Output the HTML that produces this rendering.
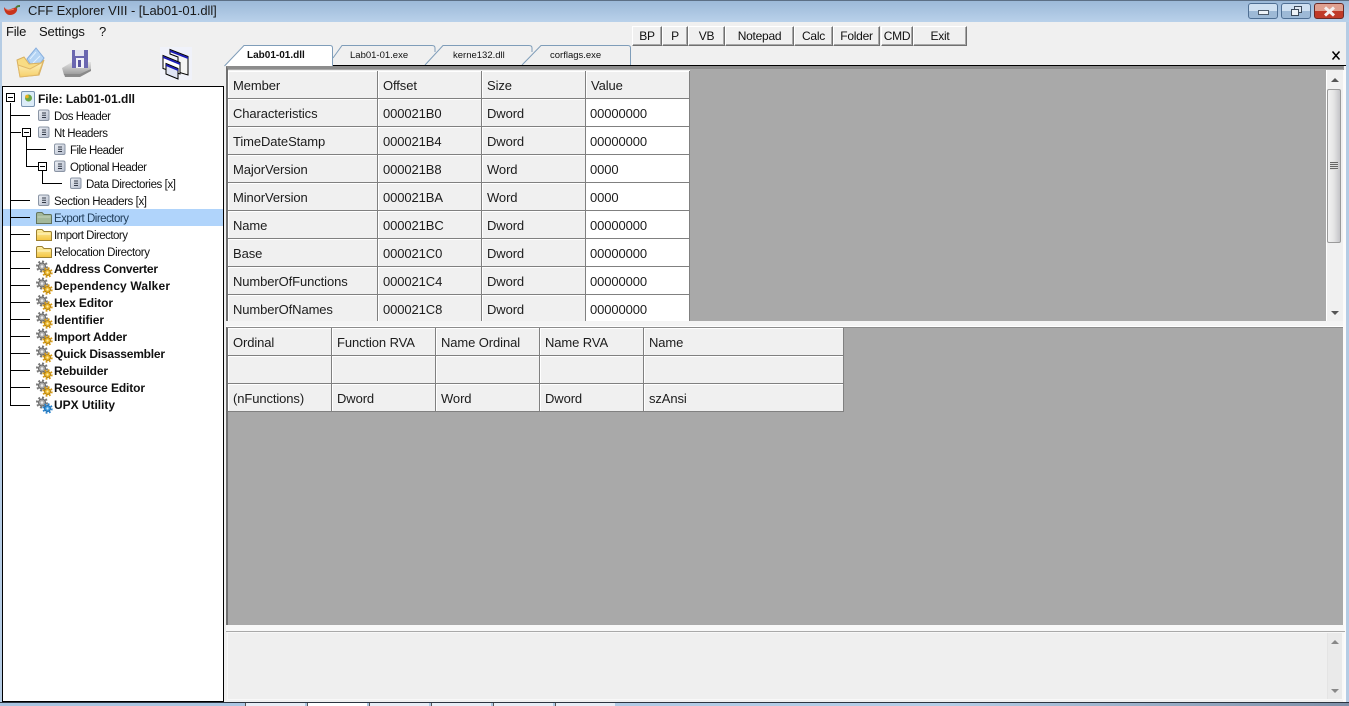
<!DOCTYPE html>
<html><head><meta charset="utf-8"><title>CFF Explorer VIII</title>
<style>
*{box-sizing:border-box}
html,body{margin:0;padding:0;width:1349px;height:706px;overflow:hidden;background:#f0f0f0;font-family:"Liberation Sans",sans-serif;font-size:13px;color:#111}
.a{position:absolute}
.t{position:absolute;white-space:nowrap;line-height:16px}
.c{position:absolute;background:#f0f0f0;border-right:1px solid #808080;border-bottom:1px solid #808080;padding:7px 0 0 5px;line-height:16px;white-space:nowrap;box-shadow:inset 1px 1px 0 #fff;letter-spacing:-.1px;color:#1c1c1c}
.w{background:#fff;padding-left:4px;box-shadow:none}
.b{position:absolute;top:26px;height:20px;background:#f0f0f0;border:1px solid;border-color:#fff #707070 #707070 #fff;box-shadow:inset -1px -1px 0 #a8a8a8;font-size:12px;line-height:18px;text-align:center;letter-spacing:-.25px}
.tab{font-size:9.5px;position:absolute;top:50px;line-height:12px;white-space:nowrap}
</style></head><body>
<!-- title bar -->
<div class="a" style="left:0;top:0;width:1349px;height:22px;background:linear-gradient(#9cb9d8,#b9d1ea);border-top:1px solid #5c6f85"></div>
<svg class="a" style="left:3px;top:3px" width="18" height="14" viewBox="0 0 18 14"><path d="M1 4C3 7 5 7 8 6 10 5 12 4 14 5 15 9 11 12 7 12 3 12 1 8 1 4Z" fill="#c8331c"/><path d="M3 6C5 8 8 7 11 6" stroke="#e87a60" fill="none"/><path d="M13 5C14 3 15 3 17 3" stroke="#4a7a3a" stroke-width="2" fill="none"/></svg>
<div class="t" style="left:28px;top:3px;font-size:13px;color:#1a1a1a;letter-spacing:-.06px">CFF Explorer VIII - [Lab01-01.dll]</div>
<div class="a" style="left:1248px;top:3px;width:30px;height:16px;border:1px solid #4f6f93;border-radius:3px;background:linear-gradient(#cfe0f1 50%,#9db9d6 50%)"><div class="a" style="left:9px;top:6px;width:11px;height:5px;background:#eef3f8;border:1px solid #4c5a6a"></div></div>
<div class="a" style="left:1281px;top:3px;width:30px;height:16px;border:1px solid #4f6f93;border-radius:3px;background:linear-gradient(#cfe0f1 50%,#9db9d6 50%)"><div class="a" style="left:12px;top:2px;width:8px;height:7px;background:#dfe8f2;border:1px solid #3c4a5a"></div><div class="a" style="left:9px;top:5px;width:8px;height:7px;background:#eef3f8;border:1px solid #3c4a5a"></div></div>
<div class="a" style="left:1314px;top:3px;width:30px;height:16px;border:1px solid #6a2a26;border-radius:3px;background:linear-gradient(#e0a090 50%,#c03a28 50%)"><svg class="a" style="left:8px;top:2px" width="13" height="11" viewBox="0 0 13 11"><path d="M2 1.500l9 8M11 1.500l-9 8" stroke="#f4eeee" stroke-width="3"/></svg></div>
<!-- window edges -->
<div class="a" style="left:0;top:22px;width:2px;height:684px;background:#b5cce4"></div>
<div class="a" style="left:1346px;top:22px;width:3px;height:684px;background:#b5cce4"></div>
<div class="a" style="left:1343px;top:70px;width:3px;height:633px;background:#fbfbfb"></div>
<!-- menu -->
<div class="t" style="left:6px;top:24px;letter-spacing:-.2px">File</div>
<div class="t" style="left:39px;top:24px;letter-spacing:-.15px">Settings</div>
<div class="t" style="left:99px;top:24px">?</div>
<!-- toolbar icons -->
<svg class="a" style="left:15px;top:46px" width="32" height="34" viewBox="0 0 32 34"><defs><linearGradient id="fy" x1="0" y1="0" x2="0" y2="1"><stop offset="0" stop-color="#fdf3c0"/><stop offset="1" stop-color="#f6cf6a"/></linearGradient></defs><path d="M12 13L21 2 29 12 20 25Z" fill="#b4d4f4" stroke="#86aede"/><path d="M15 13L21 6M18 17L25 10" stroke="#e0f0ff"/><path d="M2 14L9 11 14 18 26 17 29 14 24 29 5 31Z" fill="#f8dc84" stroke="#d8b060"/><path d="M3 19L15 23 28 16 23 29 5 31Z" fill="url(#fy)" stroke="#e0b868"/></svg>
<svg class="a" style="left:60px;top:47px" width="34" height="32" viewBox="0 0 34 32"><defs><linearGradient id="bs" x1="0" y1="0" x2="0" y2="1"><stop offset="0" stop-color="#e4e4e4"/><stop offset="1" stop-color="#9a9a9a"/></linearGradient></defs><path d="M2 21L12 15H31V23L20 28H4Z" fill="url(#bs)"/><path d="M4 27H20L31 22V24L20 30H5Z" fill="#8a8a8a"/><rect x="12" y="3" width="16" height="18" fill="#6a66b0"/><rect x="15" y="3" width="9" height="6" fill="#e4e4f0"/><rect x="16" y="11" width="8" height="10" fill="#f0f0f8"/><rect x="18" y="13" width="3" height="7" fill="#5a56a0"/></svg>
<svg class="a" style="left:160px;top:47px" width="32" height="33" viewBox="0 0 32 33"><rect width="32" height="33" fill="#f0f2fa"/><g stroke="#000"><path d="M10 2.500L28 9.500V28L18 25V10L10 7Z" fill="#f4f4f4"/><path d="M3 8.500L20 15.500V27L3 21.500Z" fill="#fff"/><path d="M6 16.500L18 21.500V32L6 27Z" fill="#dfe4f4"/></g><path d="M10 3L28 10V12L10 5ZM3 9L20 16V18L3 11ZM6 17L18 22V24L6 19Z" fill="#1a1ab4"/></svg>
<!-- tool buttons -->
<div class="b" style="left:632px;width:30px">BP</div>
<div class="b" style="left:662px;width:26px">P</div>
<div class="b" style="left:688px;width:37px">VB</div>
<div class="b" style="left:725px;width:69px">Notepad</div>
<div class="b" style="left:794px;width:39px">Calc</div>
<div class="b" style="left:833px;width:47px">Folder</div>
<div class="b" style="left:881px;width:32px">CMD</div>
<div class="b" style="left:913px;width:54px">Exit</div>
<!-- tabs -->
<svg class="a" style="left:224px;top:43px" width="410" height="24" viewBox="0 0 410 24">
<path d="M0.500 23L20 2.500H106Q108.500 2.500 108.500 5V23" fill="#fff" stroke="#7f9db9"/>
<path d="M109 15L118 2.500H208Q211 2.500 211 5V9" fill="none" stroke="#7f9db9"/>
<path d="M201 22L219 2.500H305Q308 2.500 308 5V9" fill="none" stroke="#7f9db9"/>
<path d="M298 22L317 2.500H404Q406.500 2.500 406.500 5V22" fill="none" stroke="#7f9db9"/>
</svg>
<div class="tab" style="left:247px;font-weight:bold;font-size:10px">Lab01-01.dll</div>
<div class="tab" style="left:350px">Lab01-01.exe</div>
<div class="tab" style="left:453px">kerne132.dll</div>
<div class="tab" style="left:550px">corflags.exe</div>
<div class="a" style="left:333px;top:65px;width:1013px;height:1px;background:#000"></div>
<svg class="a" style="left:1331px;top:51px" width="10" height="9" viewBox="0 0 10 9"><path d="M1.500 .5l7 8M8.500 .5l-7 8" stroke="#000" stroke-width="1.500"/></svg>
<!-- panel 1 -->
<div class="a" style="left:226px;top:66px;width:1118px;height:4px;background:#9a9a9a"></div>
<div class="a" style="left:226px;top:66px;width:1117px;height:255px;background:#a9a9a9;border-top:3px solid #8c8c8c;border-left:2px solid #707070"></div>
<div class="a" style="left:228px;top:70px;width:462px;height:251px;background:#f0f0f0;overflow:hidden">
<div class="c" style="left:0;top:1px;width:150px;height:28px">Member</div><div class="c" style="left:150px;top:1px;width:104px;height:28px">Offset</div><div class="c" style="left:254px;top:1px;width:104px;height:28px">Size</div><div class="c" style="left:358px;top:1px;width:104px;height:28px">Value</div>
<div class="c" style="left:0;top:29px;width:150px;height:28px">Characteristics</div><div class="c" style="left:150px;top:29px;width:104px;height:28px">000021B0</div><div class="c" style="left:254px;top:29px;width:104px;height:28px">Dword</div><div class="c w" style="left:358px;top:29px;width:104px;height:28px">00000000</div>
<div class="c" style="left:0;top:57px;width:150px;height:28px">TimeDateStamp</div><div class="c" style="left:150px;top:57px;width:104px;height:28px">000021B4</div><div class="c" style="left:254px;top:57px;width:104px;height:28px">Dword</div><div class="c w" style="left:358px;top:57px;width:104px;height:28px">00000000</div>
<div class="c" style="left:0;top:85px;width:150px;height:28px">MajorVersion</div><div class="c" style="left:150px;top:85px;width:104px;height:28px">000021B8</div><div class="c" style="left:254px;top:85px;width:104px;height:28px">Word</div><div class="c w" style="left:358px;top:85px;width:104px;height:28px">0000</div>
<div class="c" style="left:0;top:113px;width:150px;height:28px">MinorVersion</div><div class="c" style="left:150px;top:113px;width:104px;height:28px">000021BA</div><div class="c" style="left:254px;top:113px;width:104px;height:28px">Word</div><div class="c w" style="left:358px;top:113px;width:104px;height:28px">0000</div>
<div class="c" style="left:0;top:141px;width:150px;height:28px">Name</div><div class="c" style="left:150px;top:141px;width:104px;height:28px">000021BC</div><div class="c" style="left:254px;top:141px;width:104px;height:28px">Dword</div><div class="c w" style="left:358px;top:141px;width:104px;height:28px">00000000</div>
<div class="c" style="left:0;top:169px;width:150px;height:28px">Base</div><div class="c" style="left:150px;top:169px;width:104px;height:28px">000021C0</div><div class="c" style="left:254px;top:169px;width:104px;height:28px">Dword</div><div class="c w" style="left:358px;top:169px;width:104px;height:28px">00000000</div>
<div class="c" style="left:0;top:197px;width:150px;height:28px">NumberOfFunctions</div><div class="c" style="left:150px;top:197px;width:104px;height:28px">000021C4</div><div class="c" style="left:254px;top:197px;width:104px;height:28px">Dword</div><div class="c w" style="left:358px;top:197px;width:104px;height:28px">00000000</div>
<div class="c" style="left:0;top:225px;width:150px;height:28px">NumberOfNames</div><div class="c" style="left:150px;top:225px;width:104px;height:28px">000021C8</div><div class="c" style="left:254px;top:225px;width:104px;height:28px">Dword</div><div class="c w" style="left:358px;top:225px;width:104px;height:28px">00000000</div>
</div>
<!-- scrollbar 1 -->
<div class="a" style="left:1326px;top:70px;width:17px;height:251px;background:#f0f0f0;border-left:1px solid #fff"></div>
<svg class="a" style="left:1331px;top:78px" width="8" height="4"><path d="M4 0L8 4H0Z" fill="#555"/></svg>
<svg class="a" style="left:1331px;top:311px" width="8" height="4"><path d="M4 4L8 0H0Z" fill="#555"/></svg>
<div class="a" style="left:1327px;top:89px;width:14px;height:154px;border:1px solid #9a9a9a;border-radius:2px;background:linear-gradient(90deg,#f2f2f2,#e4e4e4 50%,#c4c4c8)"></div>
<div class="a" style="left:1330px;top:162px;width:8px;height:8px;background:repeating-linear-gradient(#666 0 1px,#ddd 1px 2px)"></div>
<!-- splitter 1 -->
<div class="a" style="left:226px;top:321px;width:1117px;height:6px;background:#f4f4f4;border-bottom:1px solid #fff"></div>
<!-- panel 2 -->
<div class="a" style="left:226px;top:327px;width:1117px;height:299px;background:#a9a9a9;border-top:1px solid #8c8c8c;border-left:2px solid #707070"></div>
<div class="a" style="left:228px;top:328px;width:616px;height:84px;overflow:hidden">
<div class="c" style="left:0;top:0;width:104px;height:28px">Ordinal</div><div class="c" style="left:104px;top:0;width:104px;height:28px">Function RVA</div><div class="c" style="left:208px;top:0;width:104px;height:28px">Name Ordinal</div><div class="c" style="left:312px;top:0;width:104px;height:28px">Name RVA</div><div class="c" style="left:416px;top:0;width:200px;height:28px">Name</div>
<div class="c" style="left:0;top:28px;width:104px;height:28px"></div><div class="c" style="left:104px;top:28px;width:104px;height:28px"></div><div class="c" style="left:208px;top:28px;width:104px;height:28px"></div><div class="c" style="left:312px;top:28px;width:104px;height:28px"></div><div class="c" style="left:416px;top:28px;width:200px;height:28px"></div>
<div class="c" style="left:0;top:56px;width:104px;height:28px">(nFunctions)</div><div class="c" style="left:104px;top:56px;width:104px;height:28px">Dword</div><div class="c" style="left:208px;top:56px;width:104px;height:28px">Word</div><div class="c" style="left:312px;top:56px;width:104px;height:28px">Dword</div><div class="c" style="left:416px;top:56px;width:200px;height:28px">szAnsi</div>
</div>
<!-- splitter 2 and panel 3 -->
<div class="a" style="left:226px;top:625px;width:1118px;height:6px;background:#f8f8f8"></div>
<div class="a" style="left:226px;top:631px;width:1119px;height:1px;background:#a9a9a9"></div>
<div class="a" style="left:227px;top:632px;width:1117px;height:68px;background:#efefef;border:1px solid #f8f8f8"></div>
<div class="a" style="left:1327px;top:633px;width:16px;height:66px;background:#eaeaea;border-right:1px solid #f8f8f8;border-left:1px solid #e4e4e4"></div>
<svg class="a" style="left:1331px;top:640px" width="8" height="4"><path d="M4 0L8 4H0Z" fill="#888"/></svg>
<svg class="a" style="left:1331px;top:689px" width="8" height="4"><path d="M4 4L8 0H0Z" fill="#888"/></svg>
<!-- tree -->
<div class="a" style="left:2px;top:86px;width:222px;height:617px;background:#fff;border:2px solid #000;border-width:1px 1px 2px 1px"></div>
<div class="a" style="left:3px;top:209px;width:220px;height:17px;background:#b0d4fb"></div>
<svg class="a" style="left:0;top:86px;font-family:'Liberation Sans',sans-serif" width="225" height="340" viewBox="0 86 225 340">
<defs>
<linearGradient id="dg" x1="0" y1="0" x2="1" y2="1"><stop offset="0" stop-color="#eef1f6"/><stop offset="1" stop-color="#b4bccc"/></linearGradient>
<linearGradient id="yg" x1="0" y1="0" x2="0" y2="1"><stop offset="0" stop-color="#fdf0a8"/><stop offset="1" stop-color="#f4c440"/></linearGradient>
<g id="doc"><rect x="0" y="0" width="10.500" height="10.500" rx="1.500" fill="url(#dg)" stroke="#8a94a4"/><path d="M3.500 3h4M3.500 5.200h4M3.500 7.500h4" stroke="#333a48"/></g>
<g id="fld"><path d="M.5 3Q.5 1.500 2 1.500H6L8 3.500H14.500Q15.500 3.500 15.500 5V12.500H.5Z" fill="url(#yg)" stroke="#9c8030"/><path d="M1.500 6H14.500" stroke="#fff6c8"/></g>
<g id="fg"><path d="M.5 3Q.5 1.500 2 1.500H6L8 3.500H14.500Q15.500 3.500 15.500 5V12.500H.5Z" fill="#a3b89a" stroke="#64745c"/><path d="M1.500 6H14.500" stroke="#c6d4bc"/></g>
<g id="gg"><circle cx="6" cy="5.500" r="3.500" fill="#a8a8a8" stroke="#666"/><circle cx="6" cy="5.500" r="5" fill="none" stroke="#777" stroke-width="2" stroke-dasharray="2 1.900"/><circle cx="6" cy="5.500" r="1.300" fill="#eee"/></g>
<g id="gear"><use href="#gg"/><circle cx="11.500" cy="11.500" r="3" fill="#ecb428" stroke="#b08010"/><circle cx="11.500" cy="11.500" r="4.300" fill="none" stroke="#d89c18" stroke-width="1.800" stroke-dasharray="1.800 1.600"/><circle cx="11.500" cy="11.500" r="1.100" fill="#fff0a8"/></g>
<g id="gearb"><use href="#gg"/><circle cx="11.500" cy="11.500" r="3" fill="#3c9ae0" stroke="#1c6cb0"/><circle cx="11.500" cy="11.500" r="4.300" fill="none" stroke="#2c84cc" stroke-width="1.800" stroke-dasharray="1.800 1.600"/><circle cx="11.500" cy="11.500" r="1.100" fill="#c8e8ff"/></g>
</defs>
<g stroke="#000" fill="none" shape-rendering="crispEdges">
<path d="M10.500 103V405.500H30M10.500 115.500H30M10.500 132.500H21M10.500 200.500H30M10.500 217.500H30M10.500 234.500H30M10.500 251.500H30M10.500 268.500H30M10.500 285.500H30M10.500 302.500H30M10.500 319.500H30M10.500 336.500H30M10.500 353.500H30M10.500 370.500H30M10.500 387.500H30"/>
<path d="M26.500 137V166.500H38M26.500 149.500H46M42.500 171V183.500H62"/>
<rect x="6.500" y="93.500" width="8" height="8" fill="#fff"/><path d="M8 97.500h5"/>
<rect x="22.500" y="128.500" width="8" height="8" fill="#fff"/><path d="M24 132.500h5"/>
<rect x="38.500" y="162.500" width="8" height="8" fill="#fff"/><path d="M40 166.500h5"/>
</g>
<rect x="21.500" y="91.500" width="13" height="15" rx="1.500" fill="#dcecf8" stroke="#7a94b0"/><circle cx="28.500" cy="98" r="3.500" fill="#6aa84a"/><circle cx="27" cy="96.500" r="1.800" fill="#e8b020"/>
<use href="#doc" x="38.500" y="110"/><use href="#doc" x="38.500" y="127"/><use href="#doc" x="54.500" y="144"/><use href="#doc" x="54.500" y="161"/><use href="#doc" x="70.500" y="178"/><use href="#doc" x="38.500" y="195"/>
<use href="#fg" x="36" y="211"/><use href="#fld" x="36" y="228"/><use href="#fld" x="36" y="245"/>
<use href="#gear" x="36" y="261"/><use href="#gear" x="36" y="278"/><use href="#gear" x="36" y="295"/><use href="#gear" x="36" y="312"/><use href="#gear" x="36" y="329"/><use href="#gear" x="36" y="346"/><use href="#gear" x="36" y="363"/><use href="#gear" x="36" y="380"/><use href="#gearb" x="36" y="397"/>
<g font-size="11.500" fill="#111" lengthAdjust="spacing">
<text x="38" y="103" font-size="12" font-weight="bold" textLength="97">File: Lab01-01.dll</text>
<text x="54" y="120" textLength="57">Dos Header</text>
<text x="54" y="137" textLength="54">Nt Headers</text>
<text x="70" y="154" textLength="54">File Header</text>
<text x="70" y="171" textLength="77">Optional Header</text>
<text x="86" y="188" textLength="90">Data Directories [x]</text>
<text x="54" y="205" textLength="93">Section Headers [x]</text>
<text x="54" y="222" textLength="75" fill="#24405c">Export Directory</text>
<text x="54" y="239" textLength="74">Import Directory</text>
<text x="54" y="256" textLength="96">Relocation Directory</text>
<g font-weight="bold" font-size="12">
<text x="54" y="273" textLength="104">Address Converter</text>
<text x="54" y="290" textLength="116">Dependency Walker</text>
<text x="54" y="307" textLength="59">Hex Editor</text>
<text x="54" y="324" textLength="50">Identifier</text>
<text x="54" y="341" textLength="73">Import Adder</text>
<text x="54" y="358" textLength="111">Quick Disassembler</text>
<text x="54" y="375" textLength="54">Rebuilder</text>
<text x="54" y="392" textLength="91">Resource Editor</text>
<text x="54" y="409" textLength="61">UPX Utility</text>
</g></g>
</svg>
<!-- bottom taskbar -->
<div class="a" style="left:0;top:703px;width:1349px;height:3px;background:linear-gradient(90deg,#a8c4e0,#b4cde6 70%,#7e90a8)"></div>
<div class="a" style="left:0;top:702px;width:1349px;height:1px;background:#2c3440"></div>
<div class="a" style="left:245px;top:703px;width:60px;height:3px;background:#e8eef6;border-left:1px solid #555"></div>
<div class="a" style="left:307px;top:703px;width:60px;height:3px;background:#fff;border-left:1px solid #555"></div>
<div class="a" style="left:369px;top:703px;width:60px;height:3px;background:#e8eef6;border-left:1px solid #555"></div>
<div class="a" style="left:431px;top:703px;width:60px;height:3px;background:#e8eef6;border-left:1px solid #555"></div>
<div class="a" style="left:493px;top:703px;width:60px;height:3px;background:#e8eef6;border-left:1px solid #555"></div>
<div class="a" style="left:555px;top:703px;width:60px;height:3px;background:#e8eef6;border-left:1px solid #555"></div>
</body></html>
